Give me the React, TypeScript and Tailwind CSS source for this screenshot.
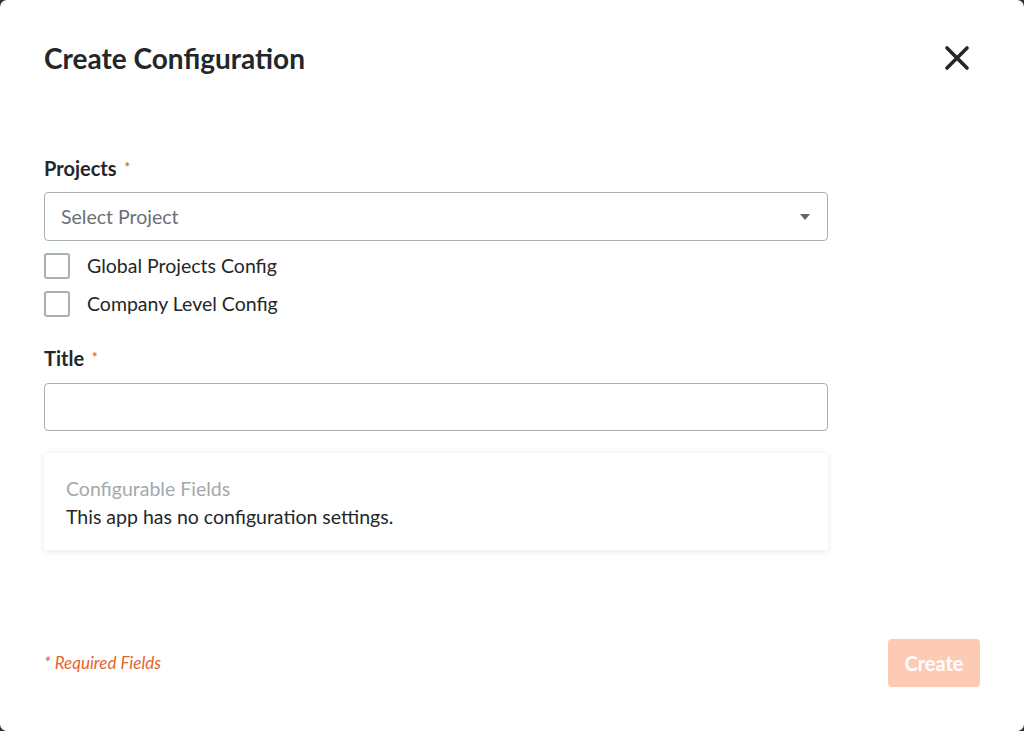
import React from "react";

function Label({ children }: { children: React.ReactNode }) {
  return (
    <div className="flex items-start h-6 text-[20px] leading-6 font-bold text-[#232729]">
      {children}
      <span className="ml-[8px] mt-[3px] text-[13px] leading-4 text-[#e2662c]">*</span>
    </div>
  );
}

function Checkbox({ label }: { label: string }) {
  return (
    <label className="flex items-center gap-[17px] h-[26px]">
      <span className="w-[26px] h-[26px] rounded-[3px] border-2 border-[#a9b0b4] bg-white" />
      <span className="text-[19.5px] text-[#232729]">{label}</span>
    </label>
  );
}

export default function App() {
  return (
    <div className="w-[1024px] h-[731px] bg-[#2e2e2e]" style={{ fontFamily: "Lato, 'Open Sans', sans-serif" }}>
      <div className="w-full h-full bg-white rounded-[7px] flex flex-col pl-[44px]">
        <div className="flex items-center justify-between pt-[42px] pr-[54px]">
          <h1 className="text-[28px] leading-8 font-bold text-[#232729]">Create Configuration</h1>
          <svg width="26" height="26" viewBox="0 0 26 26" className="text-[#232729]">
            <path d="M3 3L23 23M23 3L3 23" stroke="currentColor" strokeWidth="3.6" strokeLinecap="round" />
          </svg>
        </div>

        <div className="w-[784px] mt-[82px] flex flex-col">
          <Label>Projects</Label>
          <div className="mt-3 h-[49px] rounded-[4px] border border-[#a9b0b4] flex items-center justify-between pl-4 pr-[17px]">
            <span className="text-[19.5px] text-[#6a7075]">Select Project</span>
            <svg width="10" height="6" viewBox="0 0 10 6">
              <path d="M0 0H10L5 6Z" fill="#5f666b" />
            </svg>
          </div>
          <div className="mt-3 flex flex-col gap-3">
            <Checkbox label="Global Projects Config" />
            <Checkbox label="Company Level Config" />
          </div>

          <div className="mt-[29px]">
            <Label>Title</Label>
          </div>
          <div className="mt-[13px] h-[48px] rounded-[4px] border border-[#a9b0b4]" />

          <div className="mt-[22px] rounded-[4px] bg-white shadow-[0_1px_7px_rgba(0,0,0,0.1)] pl-[22px] pt-6 pb-[21px]">
            <div className="text-[19.5px] leading-6 text-[#a3a9ad]">Configurable Fields</div>
            <div className="mt-1 text-[19.5px] leading-6 text-[#232729]">This app has no configuration settings.</div>
          </div>
        </div>

        <div className="mt-auto pb-[44px] pr-[44px] flex items-center justify-between">
          <span className="text-[17px] italic text-[#e2662c]">* Required Fields</span>
          <button className="w-[92px] h-[48px] rounded-[4px] bg-[#fdcab3] text-white text-[20px] font-bold">Create</button>
        </div>
      </div>
    </div>
  );
}
